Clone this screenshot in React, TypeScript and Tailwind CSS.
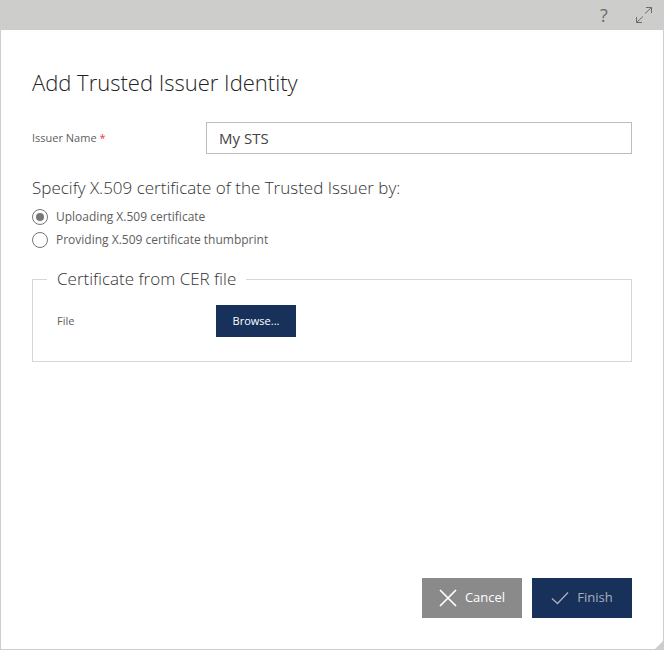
import { useState } from "react";

const methods = [
  { id: "upload", label: "Uploading X.509 certificate" },
  { id: "thumbprint", label: "Providing X.509 certificate thumbprint" }
];

function ExpandIcon() {
  return (
    <svg width="18" height="18" viewBox="0 0 18 18" fill="none" stroke="#6b6b6b" aria-hidden="true">
      <path d="M11 1.5h5.5V7M16.5 1.5l-6.5 6M1.5 11v5.5H7M1.5 16.5l6.5-6" />
    </svg>
  );
}

function CrossIcon() {
  return (
    <svg width="18" height="18" viewBox="0 0 18 18" fill="none" stroke="currentColor" strokeWidth="1.7" aria-hidden="true">
      <path d="M1 1l16 16M17 1L1 17" />
    </svg>
  );
}

function CheckIcon() {
  return (
    <svg width="18" height="18" viewBox="0 0 18 18" fill="none" stroke="currentColor" strokeWidth="1.3" aria-hidden="true">
      <path d="M1 9.5l5.5 5L17 3.5" />
    </svg>
  );
}

export default function App() {
  const [name, setName] = useState("My STS");
  const [method, setMethod] = useState("upload");

  return (
    <div className="relative flex min-h-screen flex-col border border-t-0 border-[#cdcdcc] bg-white font-['Open_Sans','Noto_Sans',sans-serif] text-[#5e5e5e]">
      <header className="flex h-[30px] items-center justify-end gap-6 bg-[#cdcdcc] pr-2.5">
        <button type="button" aria-label="Help" className="w-3.5 text-lg leading-none text-[#6b6b6b]">
          ?
        </button>
        <button type="button" aria-label="Maximize">
          <ExpandIcon />
        </button>
      </header>

      <form className="flex flex-1 flex-col px-[31px] pt-8 pb-[31px]" onSubmit={(event) => event.preventDefault()}>
        <h1 className="text-[22px] leading-10 font-light text-[#222]">Add Trusted Issuer Identity</h1>

        <div className="mt-5 flex items-center">
          <label htmlFor="issuer-name" className="w-[174px] shrink-0 text-[11px]">
            Issuer Name <span className="text-[#e8373e]">*</span>
          </label>
          <input
            id="issuer-name"
            type="text"
            value={name}
            onChange={(event) => setName(event.target.value)}
            className="h-8 min-w-0 flex-1 border border-[#bdbdbd] px-3 text-[15px] text-[#444] outline-none"
          />
        </div>

        <fieldset className="mt-5">
          <legend className="text-[17px] leading-7 font-light text-[#333]">
            Specify X.509 certificate of the Trusted Issuer by:
          </legend>
          <div className="mt-[3px] flex flex-col">
            {methods.map(({ id, label }) => (
              <label key={id} className="flex h-[23px] items-center gap-2 text-xs">
                <input
                  type="radio"
                  name="method"
                  checked={method === id}
                  onChange={() => setMethod(id)}
                  className="size-4 appearance-none rounded-full border border-[#777] bg-white bg-clip-content p-[3px] checked:bg-[#777]"
                />
                {label}
              </label>
            ))}
          </div>
        </fieldset>

        <fieldset className="mt-3.5 border border-[#d6d6d6] px-3.5 pb-6">
          <legend className="px-2.5 text-[17px] leading-7 font-light text-[#333]">Certificate from CER file</legend>
          <div className="mt-3 flex items-center pl-2.5">
            <label htmlFor="browse" className="w-[159px] text-[11px]">
              File
            </label>
            <button id="browse" type="button" className="h-8 w-20 bg-[#17315b] text-[11px] text-white">
              Browse...
            </button>
          </div>
        </fieldset>

        <div className="mt-auto flex justify-end gap-2.5">
          <button type="button" className="flex h-10 w-[100px] items-center justify-center gap-2 bg-[#8a8a8a] text-[13px] text-white">
            <CrossIcon />
            Cancel
          </button>
          <button type="submit" className="flex h-10 w-[100px] items-center justify-center gap-2 bg-[#17315b] text-[13px] text-[#a9afb9]">
            <CheckIcon />
            Finish
          </button>
        </div>
      </form>

      <svg className="absolute right-0 bottom-0" width="8" height="8" viewBox="0 0 8 8" aria-hidden="true">
        <path d="M8 0v8H0z" fill="#cdcdcc" />
      </svg>
    </div>
  );
}
